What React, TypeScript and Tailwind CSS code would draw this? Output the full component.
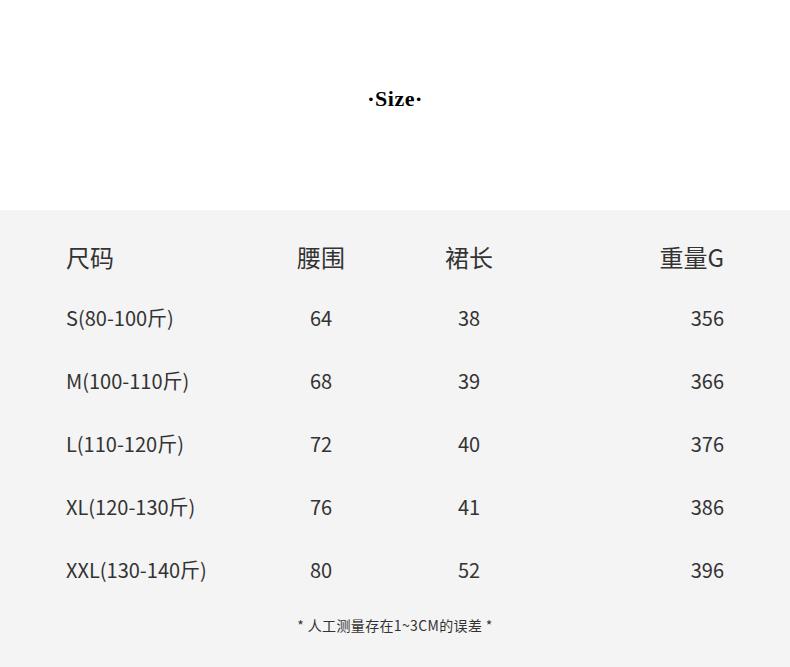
const rows = [
  { size: "S(80-100斤)", waist: "64", length: "38", weight: "356" },
  { size: "M(100-110斤)", waist: "68", length: "39", weight: "366" },
  { size: "L(110-120斤)", waist: "72", length: "40", weight: "376" },
  { size: "XL(120-130斤)", waist: "76", length: "41", weight: "386" },
  { size: "XXL(130-140斤)", waist: "80", length: "52", weight: "396" },
]

const cjk = "font-['Noto_Sans_CJK_SC',_'Noto_Sans',_sans-serif]"

const App = () => (
  <div className={`w-[790px] h-[667px] bg-white text-[#333] ${cjk}`}>
    <div className="h-[210px] flex items-center justify-center pb-[12px]">
      <h1 className="font-['Liberation_Serif',_serif] font-bold text-[22px] text-black leading-none tracking-[0.5px]">
        ·Size·
      </h1>
    </div>

    <div className="h-[457px] bg-[#f4f4f4] pt-[17px]">
      <div className="flex items-center h-[59px] text-[24px]">
        <div className="w-[266px] pl-[66px]">尺码</div>
        <div className="w-[110px] text-center">腰围</div>
        <div className="w-[186px] text-center">裙长</div>
        <div className="w-[162px] text-right">重量G</div>
      </div>

      {rows.map((r) => (
        <div key={r.size} className="flex items-center h-[63px] text-[20px]">
          <div className="w-[266px] pl-[66px]">{r.size}</div>
          <div className="w-[110px] text-center">{r.waist}</div>
          <div className="w-[186px] text-center">{r.length}</div>
          <div className="w-[162px] text-right">{r.weight}</div>
        </div>
      ))}

      <p className="text-center text-[14px] tracking-[0.35px] mt-[14px]">* 人工测量存在1~3CM的误差 *</p>
    </div>
  </div>
)

export default App
